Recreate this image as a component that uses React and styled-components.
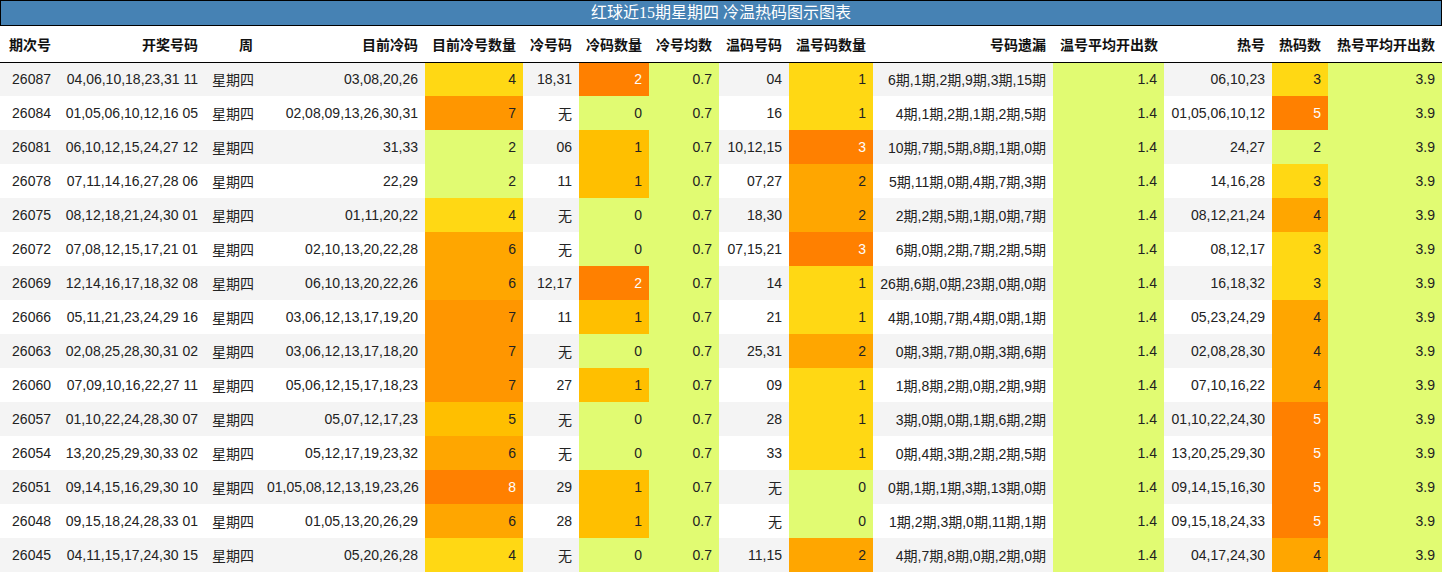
import React from "react";
import styled, { createGlobalStyle } from "styled-components";

const GlobalStyle = createGlobalStyle`
  html, body {
    margin: 0;
    padding: 0;
    background: #ffffff;
  }
  body {
    font-family: "Liberation Sans", "Noto Sans CJK SC", sans-serif;
    color: #222;
  }
`;

const Wrapper = styled.div`
  width: 1442px;
`;

const TitleBar = styled.div`
  height: 24px;
  line-height: 24px;
  border: 1px solid #000;
  background: #4682b4;
  color: #ffffff;
  text-align: center;
  font-family: "Liberation Serif", "Noto Sans CJK SC", serif;
  font-size: 16px;
`;

const Table = styled.table`
  width: 1442px;
  table-layout: fixed;
  border-collapse: collapse;
  font-size: 14px;
`;

const HeadRow = styled.tr`
  height: 36px;
  border-bottom: 1px solid #000;
`;

const HeadCell = styled.th`
  padding: 0 7px;
  text-align: right;
  font-weight: bold;
  color: #111;
  white-space: nowrap;
`;

const Row = styled.tr`
  height: 34px;
  background: ${(p) => (p.$alt ? "#ffffff" : "#f4f4f4")};
`;

const Cell = styled.td`
  padding: 0 7px;
  text-align: right;
  white-space: nowrap;
  background: ${(p) => p.$bg || "transparent"};
  color: ${(p) => (p.$light ? "#fdfdfd" : "#222")};
`;

// 색상 단계
const GREEN = "#e1fb72";
const YELLOW = "#ffd814";
const AMBER = "#ffbf00";
const ORANGE = "#ffa600";
const DEEP = "#ff9600";
const DARK = "#ff8000";

const coldScale = { 2: GREEN, 3: YELLOW, 4: YELLOW, 5: AMBER, 6: ORANGE, 7: DEEP, 8: DARK };
const coldCodeScale = { 0: GREEN, 1: AMBER, 2: DARK };
const warmScale = { 0: GREEN, 1: YELLOW, 2: ORANGE, 3: DARK };
const hotScale = { 2: GREEN, 3: YELLOW, 4: ORANGE, 5: DARK };

const widths = [58, 147, 55, 165, 98, 56, 70, 70, 70, 84, 180, 111, 108, 56, 114];

const headers = [
  "期次号", "开奖号码", "周", "目前冷码", "目前冷号数量", "冷号码", "冷码数量", "冷号均数",
  "温码号码", "温号码数量", "号码遗漏", "温号平均开出数", "热号", "热码数", "热号平均开出数",
];

const rows = [
  ["26087", "04,06,10,18,23,31 11", "03,08,20,26", 4, "18,31", 2, "04", 1, "6期,1期,2期,9期,3期,15期", "06,10,23", 3],
  ["26084", "01,05,06,10,12,16 05", "02,08,09,13,26,30,31", 7, "无", 0, "16", 1, "4期,1期,2期,1期,2期,5期", "01,05,06,10,12", 5],
  ["26081", "06,10,12,15,24,27 12", "31,33", 2, "06", 1, "10,12,15", 3, "10期,7期,5期,8期,1期,0期", "24,27", 2],
  ["26078", "07,11,14,16,27,28 06", "22,29", 2, "11", 1, "07,27", 2, "5期,11期,0期,4期,7期,3期", "14,16,28", 3],
  ["26075", "08,12,18,21,24,30 01", "01,11,20,22", 4, "无", 0, "18,30", 2, "2期,2期,5期,1期,0期,7期", "08,12,21,24", 4],
  ["26072", "07,08,12,15,17,21 01", "02,10,13,20,22,28", 6, "无", 0, "07,15,21", 3, "6期,0期,2期,7期,2期,5期", "08,12,17", 3],
  ["26069", "12,14,16,17,18,32 08", "06,10,13,20,22,26", 6, "12,17", 2, "14", 1, "26期,6期,0期,23期,0期,0期", "16,18,32", 3],
  ["26066", "05,11,21,23,24,29 16", "03,06,12,13,17,19,20", 7, "11", 1, "21", 1, "4期,10期,7期,4期,0期,1期", "05,23,24,29", 4],
  ["26063", "02,08,25,28,30,31 02", "03,06,12,13,17,18,20", 7, "无", 0, "25,31", 2, "0期,3期,7期,0期,3期,6期", "02,08,28,30", 4],
  ["26060", "07,09,10,16,22,27 11", "05,06,12,15,17,18,23", 7, "27", 1, "09", 1, "1期,8期,2期,0期,2期,9期", "07,10,16,22", 4],
  ["26057", "01,10,22,24,28,30 07", "05,07,12,17,23", 5, "无", 0, "28", 1, "3期,0期,0期,1期,6期,2期", "01,10,22,24,30", 5],
  ["26054", "13,20,25,29,30,33 02", "05,12,17,19,23,32", 6, "无", 0, "33", 1, "0期,4期,3期,2期,2期,5期", "13,20,25,29,30", 5],
  ["26051", "09,14,15,16,29,30 10", "01,05,08,12,13,19,23,26", 8, "29", 1, "无", 0, "0期,1期,1期,3期,13期,0期", "09,14,15,16,30", 5],
  ["26048", "09,15,18,24,28,33 01", "01,05,13,20,26,29", 6, "28", 1, "无", 0, "1期,2期,3期,0期,11期,1期", "09,15,18,24,33", 5],
  ["26045", "04,11,15,17,24,30 15", "05,20,26,28", 4, "无", 0, "11,15", 2, "4期,7期,8期,0期,2期,0期", "04,17,24,30", 4],
];

const Heat = ({ value, scale }) => {
  const bg = scale[value];
  return (
    <Cell $bg={bg} $light={bg === DARK}>
      {value}
    </Cell>
  );
};

export default function App() {
  return (
    <Wrapper>
      <GlobalStyle />
      <TitleBar>红球近15期星期四 冷温热码图示图表</TitleBar>
      <Table>
        <colgroup>
          {widths.map((w, i) => (
            <col key={i} style={{ width: w }} />
          ))}
        </colgroup>
        <thead>
          <HeadRow>
            {headers.map((h) => (
              <HeadCell key={h}>{h}</HeadCell>
            ))}
          </HeadRow>
        </thead>
        <tbody>
          {rows.map((r, i) => {
            const [issue, draw, cold, coldN, coldCode, coldCodeN, warm, warmN, miss, hot, hotN] = r;
            return (
              <Row key={issue} $alt={i % 2 === 1}>
                <Cell>{issue}</Cell>
                <Cell>{draw}</Cell>
                <Cell>星期四</Cell>
                <Cell>{cold}</Cell>
                <Heat value={coldN} scale={coldScale} />
                <Cell>{coldCode}</Cell>
                <Heat value={coldCodeN} scale={coldCodeScale} />
                <Cell $bg={GREEN}>0.7</Cell>
                <Cell>{warm}</Cell>
                <Heat value={warmN} scale={warmScale} />
                <Cell>{miss}</Cell>
                <Cell $bg={GREEN}>1.4</Cell>
                <Cell>{hot}</Cell>
                <Heat value={hotN} scale={hotScale} />
                <Cell $bg={GREEN}>3.9</Cell>
              </Row>
            );
          })}
        </tbody>
      </Table>
    </Wrapper>
  );
}
